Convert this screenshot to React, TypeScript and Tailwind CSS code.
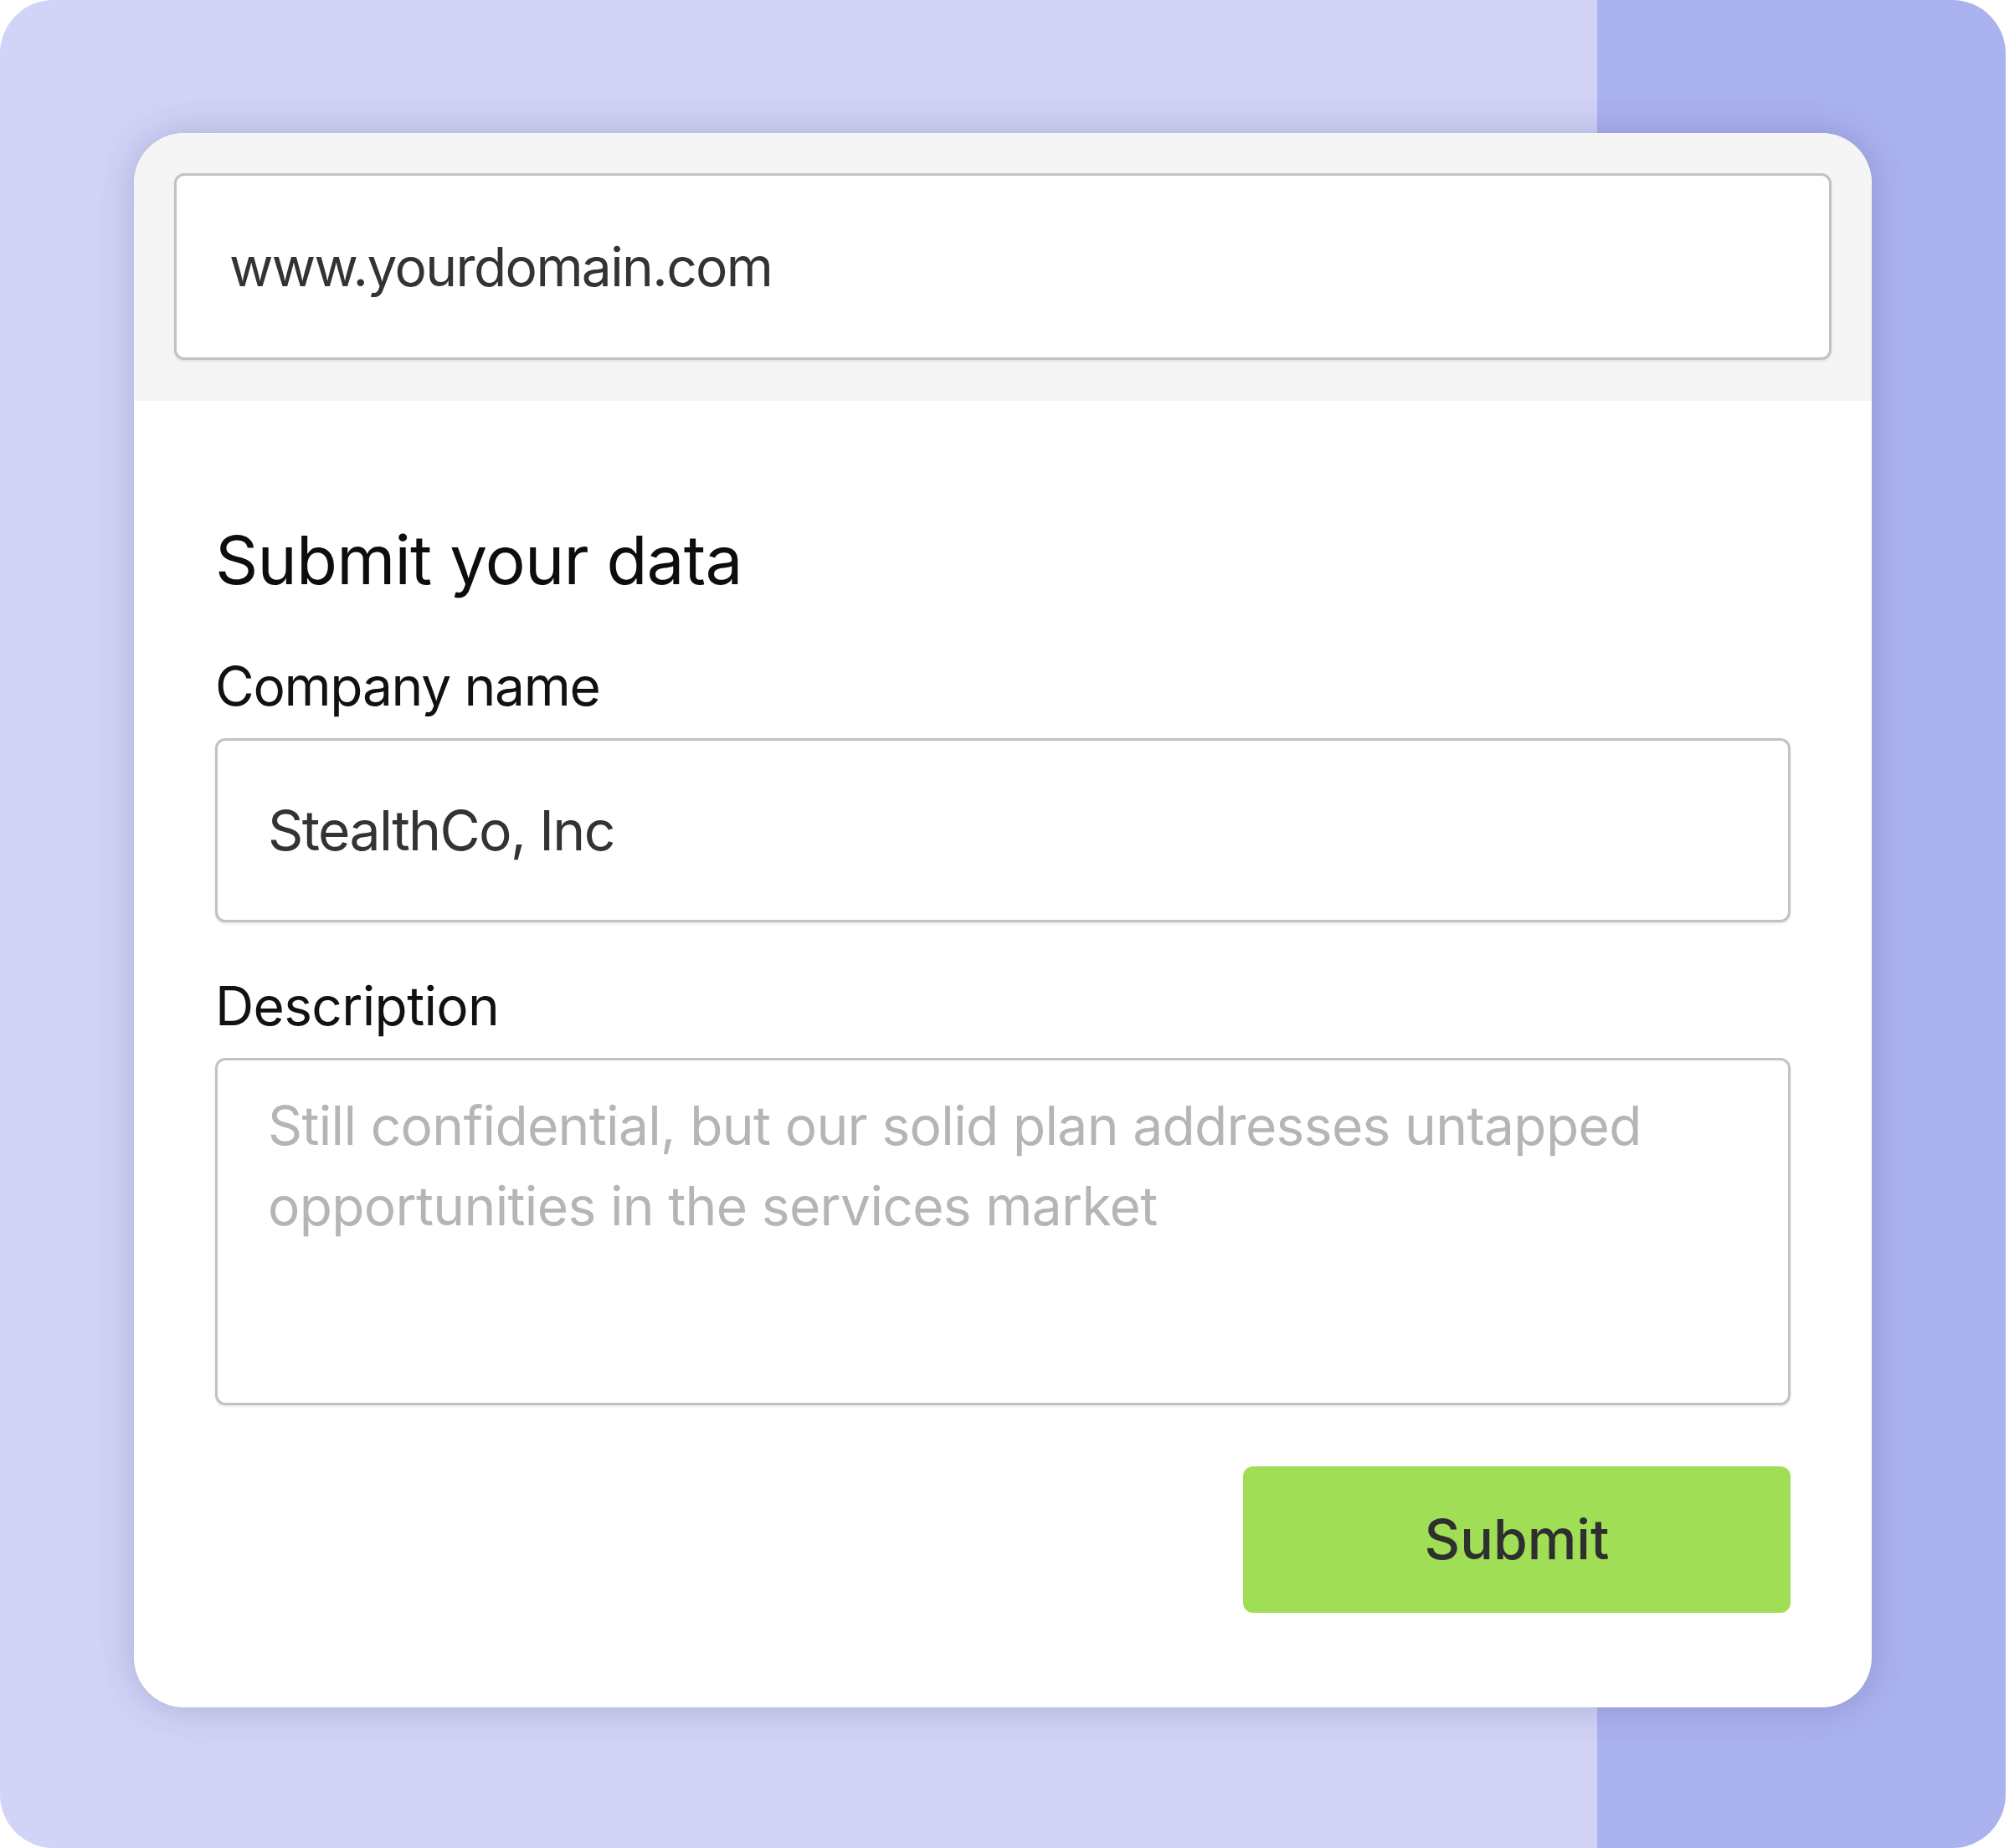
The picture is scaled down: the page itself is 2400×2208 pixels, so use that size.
const Field = ({ children, className = "" }: { children: React.ReactNode; className?: string }) => (
  <div
    className={`rounded-[12px] border-[3px] border-[#c2c2c2] bg-white shadow-[0_2px_3px_rgba(0,0,0,0.08)] ${className}`}
  >
    {children}
  </div>
);

const App = () => {
  return (
    <div className="w-[2400px] h-[2208px] bg-white font-['Inter',sans-serif]">
      <div className="w-[2396px] h-[2208px] rounded-[64px] overflow-hidden bg-[linear-gradient(to_right,#d1d3f7_1908px,#abb2f0_1908px)] pt-[159px] pl-[160px]">
        <div className="w-[2076px] h-[1881px] rounded-[60px] overflow-hidden bg-white shadow-[0_0_48px_rgba(40,40,90,0.22)]">
          {/* address bar */}
          <div className="h-[320px] bg-[#f5f5f5] p-[48px]">
            <Field className="h-[223px] flex items-center px-[63px]">
              <span className="text-[64px] leading-none text-[#333] tracking-[-0.025em]">www.yourdomain.com</span>
            </Field>
          </div>

          {/* form */}
          <div className="px-[97px] pt-[142px]">
            <h2 className="text-[80px] leading-[96px] text-[#0d0d0d] tracking-[-0.01em]">Submit your data</h2>

            <label className="block mt-[64px] text-[64px] leading-[77px] text-[#111] tracking-[-0.02em]">
              Company name
            </label>
            <Field className="mt-[24px] h-[220px] flex items-center px-[60px]">
              <span className="text-[66px] leading-none text-[#333] tracking-[-0.025em]">StealthCo, Inc</span>
            </Field>

            <label className="block mt-[61px] text-[64px] leading-[77px] text-[#111] tracking-[-0.01em]">
              Description
            </label>
            <Field className="mt-[24px] h-[415px] px-[60px] pt-[30px]">
              <p className="text-[64px] leading-[96px] text-[#b5b5b5] tracking-[-0.01em] max-w-[1750px]">
                Still confidential, but our solid plan addresses untapped opportunities in the services market
              </p>
            </Field>

            <div className="flex justify-end mt-[73px]">
              <button className="w-[654px] h-[175px] rounded-[12px] bg-[#a0de56] text-[66px] font-medium text-[#2f2f2f] flex items-center justify-center">
                Submit
              </button>
            </div>
          </div>
        </div>
      </div>
    </div>
  );
};

export default App;
